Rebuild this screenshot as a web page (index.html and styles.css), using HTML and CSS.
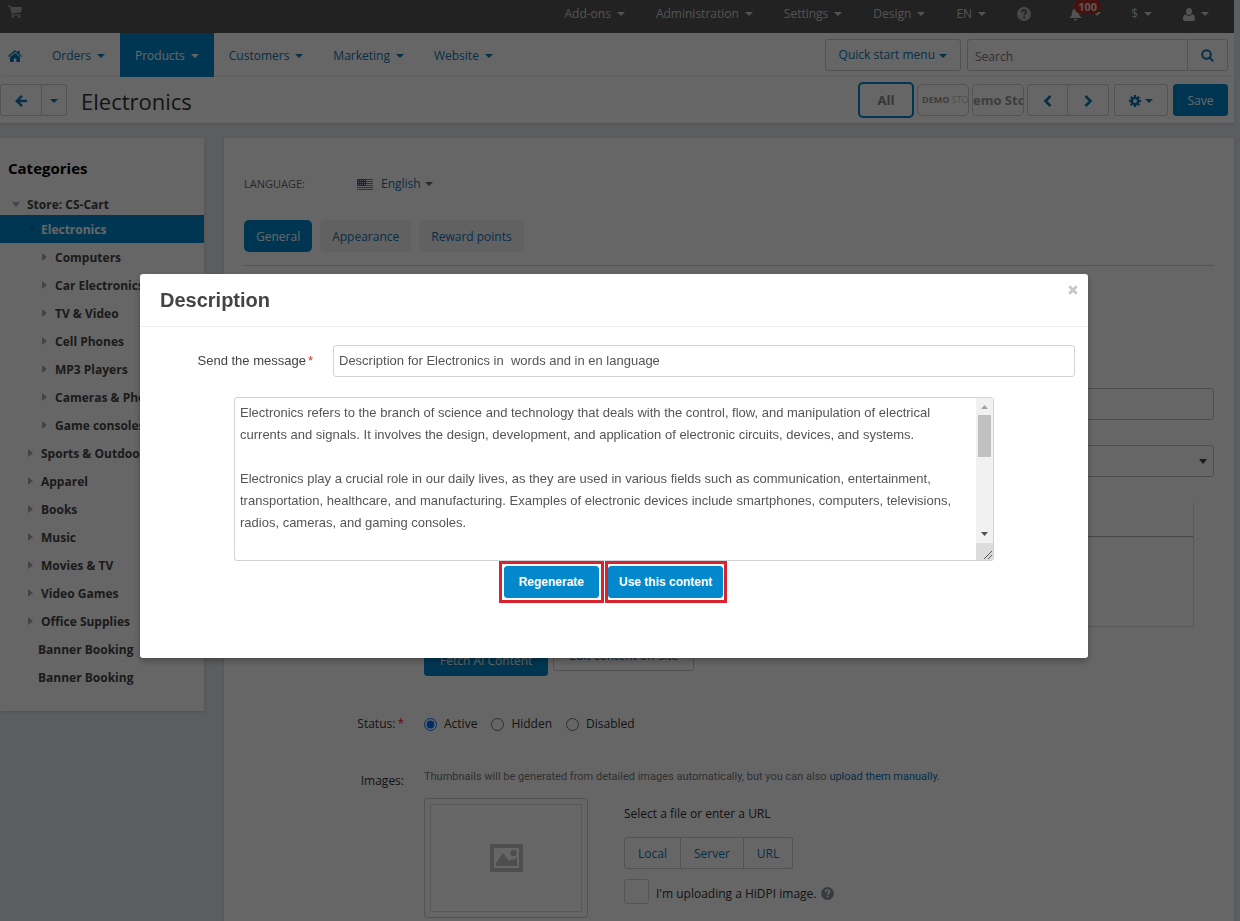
FILE: index.html
```html
<!DOCTYPE html>
<html lang="en">
<head>
    <meta charset="UTF-8">
    <meta name="viewport" content="width=device-width, initial-scale=1.0">
    <title>Electronics - Products</title>
    <link rel="stylesheet" href="styles.css">
</head>
<body>

<!-- Icons -->
<svg class="sprite" aria-hidden="true">
    <symbol id="i-help" viewBox="0 0 14 14">
        <circle cx="7" cy="7" r="7" fill="currentColor"/>
        <path d="M4.800 5.400c0-3 4.500-2.900 4.500-.3 0 1.500-2.200 1.500-2.200 3.200" fill="none" stroke="var(--hole)" stroke-width="1.700"/>
        <rect x="6.200" y="9.400" width="1.800" height="1.800" fill="var(--hole)"/>
    </symbol>
</svg>

<header class="topbar">
    <a href="#" class="cart" aria-label="Storefront">
        <svg width="14" height="13" viewBox="0 0 14 13" fill="currentColor"><path d="M0 .5h2.800l.5 1.500H14l-1 5.500-8.300.8.200 1H12.500v1.200H4L2.100 1.800H0z"/><circle cx="4.800" cy="11.700" r="1.200"/><circle cx="11.300" cy="11.700" r="1.200"/></svg>
    </a>
    <nav class="top-menu">
        <a href="#">Add-ons<i class="caret"></i></a>
        <a href="#">Administration<i class="caret"></i></a>
        <a href="#">Settings<i class="caret"></i></a>
        <a href="#">Design<i class="caret"></i></a>
        <a href="#">EN<i class="caret"></i></a>
        <a href="#" class="top-help" aria-label="Help"><svg width="14" height="14"><use href="#i-help"/></svg></a>
        <a href="#" class="bell" aria-label="Notifications">
            <svg width="13" height="13" viewBox="0 0 13 13" fill="currentColor"><path d="M6.500 0c.8 0 1 .6 1 1C10 1.800 10 4 10.200 6c.2 2 1.300 3 2.800 4H0c1.500-1 2.600-2 2.800-4C3 4 3 1.800 5.500 1c0-.4.2-1 1-1zM5 11h3c0 2-3 2-3 0z"/></svg><i class="caret"></i>
            <span class="badge">100</span>
        </a>
        <a href="#">$<i class="caret"></i></a>
        <a href="#" aria-label="Account"><svg width="12" height="13" viewBox="0 0 12 13" fill="currentColor"><path d="M6 0c2 0 3 1.500 3 3.400S7.700 7 6 7 3 5.300 3 3.400 4 0 6 0zM2.800 6.300c2 2.200 4.400 2.200 6.400 0C11.300 6.700 12 8.500 12 11c0 1.300-.8 2-2 2H2c-1.200 0-2-.7-2-2 0-2.500.7-4.300 2.800-4.700z"/></svg><i class="caret"></i></a>
    </nav>
</header>

<div class="navbar">
    <nav class="main-menu">
        <a href="#" class="home" aria-label="Home">
            <svg width="14" height="12" viewBox="0 0 14 12" fill="currentColor"><path d="M7 0l2.700 2.400V.8h1.900v3.200L14 6.100l-.8.9L7 1.700.8 7 0 6.100z"/><path d="M7 2.900l5 4.200V12H8.300V8.500H5.700V12H2V7.100z"/></svg>
        </a>
        <a href="#">Orders<i class="caret"></i></a>
        <a href="#" class="active">Products<i class="caret"></i></a>
        <a href="#">Customers<i class="caret"></i></a>
        <a href="#">Marketing<i class="caret"></i></a>
        <a href="#">Website<i class="caret"></i></a>
    </nav>
    <button class="btn quick">Quick start menu<i class="caret"></i></button>
    <form class="search">
        <input type="text" placeholder="Search" aria-label="Search">
        <button type="button" class="btn" aria-label="Find">
            <svg width="13" height="13" viewBox="0 0 13 13" fill="none" stroke="currentColor" stroke-width="2"><circle cx="5.500" cy="5.500" r="4.300"/><path d="M8.700 8.700l3.500 3.500"/></svg>
        </button>
    </form>
</div>

<div class="actions">
    <div class="btn-group">
        <button class="btn back" aria-label="Back"><svg width="12" height="12" viewBox="0 0 12 12" fill="none" stroke="currentColor" stroke-width="2.400"><path d="M12 6H2M7 .9L1.800 6 7 11.100"/></svg></button>
        <button class="btn back-more" aria-label="Recent pages"><i class="caret"></i></button>
    </div>
    <h1>Electronics</h1>
    <div class="stores">
        <button class="store selected">All</button>
        <button class="store demo-logo"><b>DEMO</b> STO</button>
        <button class="store demo-text">emo Sto</button>
    </div>
    <div class="btn-group">
        <button class="btn pager" aria-label="Previous"><svg width="9" height="12" viewBox="0 0 9 12" fill="none" stroke="currentColor" stroke-width="2.600"><path d="M7.500 1L2.500 6l5 5"/></svg></button>
        <button class="btn pager" aria-label="Next"><svg width="9" height="12" viewBox="0 0 9 12" fill="none" stroke="currentColor" stroke-width="2.600"><path d="M1.500 1l5 5-5 5"/></svg></button>
    </div>
    <button class="btn gear" aria-label="Tools">
        <svg width="12" height="12" viewBox="0 0 12 12" fill="none" stroke="currentColor"><circle cx="6" cy="6" r="3.100" stroke-width="2.400"/><path d="M6 0v2.500M6 9.500V12M0 6h2.500M9.500 6H12M1.800 1.800l1.700 1.700M8.500 8.500l1.700 1.700M10.200 1.800L8.500 3.500M3.500 8.500l-1.700 1.700" stroke-width="2.300"/></svg><i class="caret"></i>
    </button>
    <button class="btn btn-primary save">Save</button>
</div>

<div class="page">
    <aside class="sidebar">
        <h2>Categories</h2>
        <ul class="tree">
            <li class="store-row"><i class="arrow down"></i><a href="#">Store: CS-Cart</a></li>
            <li class="level-1 current"><i class="arrow down"></i><a href="#">Electronics</a></li>
            <li class="level-2"><i class="arrow"></i><a href="#">Computers</a></li>
            <li class="level-2"><i class="arrow"></i><a href="#">Car Electronics</a></li>
            <li class="level-2"><i class="arrow"></i><a href="#">TV &amp; Video</a></li>
            <li class="level-2"><i class="arrow"></i><a href="#">Cell Phones</a></li>
            <li class="level-2"><i class="arrow"></i><a href="#">MP3 Players</a></li>
            <li class="level-2"><i class="arrow"></i><a href="#">Cameras &amp; Photo</a></li>
            <li class="level-2"><i class="arrow"></i><a href="#">Game consoles</a></li>
            <li class="level-1"><i class="arrow"></i><a href="#">Sports &amp; Outdoors</a></li>
            <li class="level-1"><i class="arrow"></i><a href="#">Apparel</a></li>
            <li class="level-1"><i class="arrow"></i><a href="#">Books</a></li>
            <li class="level-1"><i class="arrow"></i><a href="#">Music</a></li>
            <li class="level-1"><i class="arrow"></i><a href="#">Movies &amp; TV</a></li>
            <li class="level-1"><i class="arrow"></i><a href="#">Video Games</a></li>
            <li class="level-1"><i class="arrow"></i><a href="#">Office Supplies</a></li>
            <li class="plain"><a href="#">Banner Booking</a></li>
            <li class="plain"><a href="#">Banner Booking</a></li>
        </ul>
    </aside>

    <main class="content">
        <div class="language">
            <span class="language-label">Language:</span>
            <svg width="16" height="11" viewBox="0 0 16 11"><rect width="16" height="11" fill="#fff"/><path d="M0 .5h16M0 2.500h16M0 4.500h16M0 6.500h16M0 8.500h16M0 10.500h16" stroke="#ff4a38"/><rect width="9" height="7" fill="#2f5fe0"/><path d="M1 1.500h7M1 3.500h7M1 5.500h7" stroke="#c5d1ee" stroke-dasharray="1 1"/></svg>
            <a href="#">English</a><i class="caret"></i>
        </div>
        <div class="tabs">
            <button class="tab active">General</button>
            <button class="tab">Appearance</button>
            <button class="tab">Reward points</button>
        </div>

        <form class="category-form">
            <div class="row">
                <span></span>
                <input type="text" class="text-input" aria-label="Name">
            </div>
            <div class="row">
                <span></span>
                <select class="text-input" aria-label="Location"><option></option></select>
            </div>
            <div class="row">
                <span></span>
                <div>
                    <div class="editor">
                        <div class="editor-toolbar"></div>
                        <div class="editor-body"></div>
                    </div>
                    <div class="editor-buttons">
                        <button type="button" class="btn btn-primary fetch">Fetch AI Content</button>
                        <button type="button" class="btn">Edit content on-site</button>
                    </div>
                </div>
            </div>
            <div class="row status">
                <span class="label">Status:<em>*</em></span>
                <div class="radios">
                    <label><input type="radio" name="status" checked>Active</label>
                    <label><input type="radio" name="status">Hidden</label>
                    <label><input type="radio" name="status">Disabled</label>
                </div>
            </div>
            <div class="row images">
                <span class="label">Images:</span>
                <div>
                    <p class="hint">Thumbnails will be generated from detailed images automatically, but you can also <a href="#">upload them manually.</a></p>
                    <div class="upload">
                        <div class="thumb"><div class="thumb-inner">
                            <svg width="33" height="28" viewBox="0 0 33 28"><rect x="2" y="2" width="29" height="24" fill="none" stroke="#c3c3c3" stroke-width="4"/><path d="M6 22v-3l7-10 6 8 3-2 2 1 3-3v9z" fill="#c3c3c3"/><circle cx="23.500" cy="9" r="3.200" fill="#c3c3c3"/></svg>
                        </div></div>
                        <div class="sources">
                            <p>Select a file or enter a URL</p>
                            <div class="btn-group">
                                <button type="button" class="btn">Local</button>
                                <button type="button" class="btn">Server</button>
                                <button type="button" class="btn">URL</button>
                            </div>
                            <label class="hidpi"><input type="checkbox"><span>I'm uploading a HiDPI image.</span><svg width="13" height="13" viewBox="0 0 14 14"><use href="#i-help"/></svg></label>
                        </div>
                    </div>
                </div>
            </div>
        </form>
    </main>
</div>

<div class="backdrop">
    <div class="modal" role="dialog" aria-labelledby="modalTitle">
        <div class="modal-header">
            <h3 id="modalTitle">Description</h3>
            <button class="close" aria-label="Close"><svg width="10" height="10" viewBox="0 0 10 10" stroke="currentColor" stroke-width="3"><path d="M1.200 1.200l7.600 7.600M8.800 1.200L1.200 8.800"/></svg></button>
        </div>
        <div class="modal-body">
            <div class="message">
                <label for="message">Send the message<em>*</em></label>
                <input type="text" id="message" value="Description for Electronics in  words and in en language">
            </div>
            <div class="answer">
                <textarea aria-label="Generated description">Electronics refers to the branch of science and technology that deals with the control, flow, and manipulation of electrical currents and signals. It involves the design, development, and application of electronic circuits, devices, and systems.

Electronics play a crucial role in our daily lives, as they are used in various fields such as communication, entertainment, transportation, healthcare, and manufacturing. Examples of electronic devices include smartphones, computers, televisions, radios, cameras, and gaming consoles.</textarea>
                <div class="scrollbar" aria-hidden="true">
                    <svg width="17" height="17" viewBox="0 0 17 17"><path d="M5 11h7L8.500 7z" fill="#a3a3a3"/></svg>
                    <div class="scroll-track"><div class="scroll-thumb"></div></div>
                    <svg width="17" height="17" viewBox="0 0 17 17"><path d="M5 6h7l-3.500 4z" fill="#505050"/></svg>
                    <svg class="grip" width="17" height="17" viewBox="0 0 17 17"><path d="M8 16l8-8M12 16l4-4" stroke="#555"/></svg>
                </div>
            </div>
            <div class="modal-buttons">
                <span class="mark"><button class="btn btn-primary">Regenerate</button></span>
                <span class="mark mark-use"><button class="btn btn-primary">Use this content</button></span>
            </div>
        </div>
    </div>
</div>

</body>
</html>
```
FILE: styles.css
```css
* {
    box-sizing: border-box;
}
html {
    background-color: #e6e9ed;
}
body {
    margin: 0;
    height: 100vh;
    overflow: hidden;
    padding-right: 6px;
    font-family: "Open Sans", "Noto Sans", sans-serif;
    font-size: 12px;
    line-height: 20px;
    color: #333;
}
a {
    color: #0e74b4;
    text-decoration: none;
}
button, input, select, textarea {
    font: inherit;
    color: inherit;
    margin: 0;
}
h1, h2, h3, p, ul {
    margin: 0;
    padding: 0;
}
em {
    font-style: normal;
    color: #e02b2b;
}
.sprite {
    display: none;
}
.caret {
    display: inline-block;
    border: 4px solid transparent;
    border-top-color: currentColor;
    border-bottom: 0;
    margin-left: 6px;
}

/* Top bar */
.topbar {
    display: flex;
    justify-content: space-between;
    height: 33px;
    padding: 0 9px 5px 8px;
    background-color: #555;
}
.cart {
    display: flex;
    padding-top: 5px;
    color: #aaa;
}
.top-menu, .top-menu a {
    display: flex;
    align-items: center;
}
.top-menu a {
    padding: 0 16px 0 15px;
    color: #d0d0d0;
}
.top-menu .top-help {
    --hole: #555;
    color: #aeb6bf;
}
.top-menu .bell {
    position: relative;
    padding: 0 15px 0 22px;
}
.bell .caret {
    margin-left: 11px;
}
.badge {
    position: absolute;
    left: 27px;
    top: -9px;
    padding: 0 4px;
    border-radius: 8px;
    background-color: #b52b27;
    color: #ddd;
    font-size: 11px;
    font-weight: bold;
    line-height: 15px;
}

/* Main menu */
.navbar {
    display: flex;
    align-items: center;
    height: 44px;
    padding-right: 6px;
    background-color: #fff;
    border-bottom: 1px solid #f8f8f8;
}
.main-menu {
    display: flex;
    flex: 1;
}
.main-menu a {
    display: flex;
    align-items: center;
    height: 44px;
    padding: 2px 15px 0;
}
.main-menu .home {
    padding-left: 8px;
    color: #0277b5;
}
.main-menu .active {
    background-color: #0388cc;
    color: #fff;
}
.btn {
    height: 32px;
    padding: 1px 13px 0;
    border: 1px solid #c8ccd1;
    border-radius: 3px;
    background-color: #fff;
    color: #0e74b4;
    white-space: nowrap;
}
.btn .caret {
    vertical-align: middle;
}
.btn svg {
    vertical-align: middle;
}
.btn-primary {
    background-color: #0388cc;
    border-color: #0388cc;
    color: #fff;
}
.btn-group {
    display: flex;
}
.btn-group .btn {
    border-radius: 0;
}
.btn-group .btn + .btn {
    border-left: 0;
}
.btn-group .btn:first-child {
    border-radius: 3px 0 0 3px;
}
.btn-group .btn:last-child {
    border-radius: 0 3px 3px 0;
}
.quick {
    margin-right: 6px;
}
.quick .caret {
    margin-left: 4px;
}
.search {
    display: flex;
}
.search input {
    width: 220px;
    height: 32px;
    padding: 3px 7px 0;
    border: 1px solid #c8ccd1;
    border-right: 0;
    border-radius: 3px 0 0 3px;
}
.search input::placeholder {
    color: #777;
}
.search .btn {
    border-radius: 0 3px 3px 0;
}

/* Page actions */
.actions {
    display: flex;
    align-items: center;
    height: 46px;
    padding-right: 6px;
    background-color: #fff;
    box-shadow: 0 1px 3px #c4c9cf;
}
.actions h1 {
    flex: 1;
    margin-left: 14px;
    padding-top: 2px;
    font-size: 22px;
    font-weight: normal;
    line-height: 32px;
}
.back {
    width: 42px;
}
.btn.back-more {
    width: 25px;
    padding: 0;
}
.back-more .caret {
    margin: 0;
}
.stores {
    display: flex;
    align-items: center;
    gap: 3px;
    margin-right: 3px;
}
.store {
    width: 52px;
    height: 32px;
    padding: 0;
    border: 1px solid #c8ccd1;
    border-radius: 5px;
    background-color: #fff;
    color: #999;
    overflow: hidden;
    white-space: nowrap;
}
.store.selected {
    width: 56px;
    height: 36px;
    border: 2px solid #0388cc;
    color: #888;
    font-weight: bold;
    font-size: 13px;
}
.demo-logo {
    padding-left: 4px;
    font-size: 9px;
    text-align: left;
    color: #c4c4c4;
}
.demo-logo b {
    color: #999;
}
.demo-text {
    font-weight: bold;
    font-size: 13px;
}
.pager {
    width: 41px;
}
.gear {
    width: 54px;
    margin: 0 5px;
}
.gear .caret {
    margin-left: 4px;
}
.save {
    width: 55px;
}

/* Categories tree */
.page {
    display: flex;
    align-items: flex-start;
    gap: 20px;
    padding-top: 15px;
}
.sidebar {
    flex: none;
    width: 204px;
    padding: 20px 0;
    background-color: #fff;
    box-shadow: 0 1px 3px #c4c9cf;
    font-weight: bold;
}
.sidebar h2 {
    margin: 0 8px 15px;
    font-size: 15px;
    color: #000;
}
.tree {
    list-style-type: none;
}
.tree li {
    display: flex;
    align-items: center;
    height: 28px;
    white-space: nowrap;
    overflow: hidden;
}
.tree a {
    padding-top: 2px;
    color: #444;
}
.tree .store-row {
    height: 22px;
    padding-left: 12px;
}
.tree .level-1 {
    padding-left: 28px;
}
.tree .level-2 {
    padding-left: 42px;
}
.tree .plain {
    padding-left: 38px;
}
.tree .current {
    background-color: #0388cc;
}
.tree .current a {
    color: #fff;
}
.arrow {
    border: 4px solid transparent;
    border-left: 5px solid #aaa;
    border-right: 0;
    margin-right: 8px;
}
.arrow.down {
    border: 4px solid transparent;
    border-top: 5px solid #aaa;
    border-bottom: 0;
    margin-right: 7px;
}
.current .arrow.down {
    border-top-color: #0b6fa5;
    margin-right: 5px;
}

/* Category form */
.content {
    flex: 1;
    min-width: 0;
    padding: 36px 20px 30px;
    background-color: #fff;
    box-shadow: 0 1px 3px #c4c9cf;
}
.language {
    display: flex;
    align-items: center;
}
.language svg {
    margin-right: 8px;
}
.language-label {
    width: 113px;
    font-size: 11px;
    text-transform: uppercase;
    color: #666;
}
.language .caret {
    margin-left: 4px;
    color: #666;
}
.tabs {
    display: flex;
    gap: 8px;
    padding: 26px 0 13px;
    border-bottom: 1px solid #ccd1d6;
}
.tab {
    height: 32px;
    padding: 2px 12px 0;
    border: 0;
    border-radius: 5px;
    background-color: #f5f3f4;
    color: #0e74b4;
}
.tab.active {
    background-color: #0388cc;
    color: #fff;
}
.category-form {
    margin-top: 122px;
}
.row {
    display: grid;
    grid-template-columns: 160px 1fr;
    column-gap: 20px;
    margin-bottom: 25px;
}
.label {
    text-align: right;
}
.label em, .message em {
    margin-left: 2px;
}
.text-input {
    width: 100%;
    height: 32px;
    border: 1px solid #c0c4c8;
    border-radius: 3px;
    background-color: #fff;
}
select.text-input {
    appearance: none;
    background: #fff url("data:image/svg+xml,%3Csvg xmlns='http://www.w3.org/2000/svg' width='8' height='5'%3E%3Cpath d='M0 0h8L4 5z' fill='%23444'/%3E%3C/svg%3E") no-repeat right 6px center;
}
.editor {
    margin-right: 20px;
    border: 1px solid #ddd;
    border-top-color: #fff;
}
.editor-toolbar {
    height: 34px;
    border-bottom: 1px solid #b0b0b0;
}
.editor-body {
    height: 89px;
}
.editor-buttons {
    display: flex;
    align-items: flex-start;
    gap: 5px;
    padding-top: 12px;
}
.editor-buttons .btn {
    padding: 1px 15px 0;
}
.fetch {
    margin-top: 5px;
}
.status {
    margin: 38px 0 33px;
}
.radios {
    display: flex;
    gap: 14px;
}
.radios label {
    display: flex;
    align-items: center;
}
.radios input {
    width: 13px;
    height: 13px;
    margin-right: 7px;
}
.images .label {
    padding-top: 4px;
}
.hint {
    font-family: Roboto, "Open Sans", sans-serif;
    font-size: 11px;
    color: #777;
}
.upload {
    display: flex;
    gap: 36px;
    margin-top: 11px;
}
.thumb {
    width: 164px;
    height: 120px;
    padding: 5px;
    border: 1px solid #ccc;
    border-radius: 3px;
}
.thumb-inner {
    display: flex;
    align-items: center;
    justify-content: center;
    height: 100%;
    border: 1px solid #ddd;
}
.sources {
    padding-top: 6px;
}
.sources .btn-group {
    margin: 13px 0 10px;
}
.hidpi {
    --hole: #fff;
    display: flex;
    align-items: center;
}
.hidpi input {
    appearance: none;
    width: 25px;
    height: 25px;
    margin-right: 7px;
    border: 1px solid #d5d5d5;
    border-radius: 3px;
}
.hidpi span, .hidpi svg {
    margin-top: 4px;
}
.hidpi svg {
    margin-left: 5px;
    color: #8c94a0;
}

/* Description dialog */
.backdrop {
    position: fixed;
    inset: 0;
    padding: 274px 152px 0 140px;
    background-color: rgba(0, 0, 0, 0.6);
    font-family: "Liberation Sans", Arial, sans-serif;
    font-size: 13px;
}
.modal {
    border-radius: 3px;
    background-color: #fff;
    box-shadow: 0 3px 7px rgba(0, 0, 0, 0.3);
}
.modal-header {
    display: flex;
    justify-content: space-between;
    align-items: flex-start;
    padding: 11px 10px 11px 20px;
    border-bottom: 1px solid #eee;
}
.modal-header h3 {
    font-size: 20px;
    line-height: 30px;
    color: #444;
}
.close {
    display: flex;
    padding: 0;
    border: 0;
    background: none;
    color: #c8c8c8;
}
.modal-body {
    padding: 18px 13px 55px;
}
.message {
    display: flex;
    align-items: center;
    gap: 20px;
}
.message label {
    width: 160px;
    text-align: right;
    color: #444;
}
.message input {
    flex: 1;
    height: 32px;
    padding: 0 5px 2px;
    border: 1px solid #d0d4d8;
    border-radius: 3px;
    color: #555;
}
.answer {
    display: flex;
    max-width: 760px;
    height: 164px;
    margin: 20px auto 0;
    border: 1px solid #d0d4d8;
    border-radius: 3px;
}
.answer textarea {
    flex: 1;
    padding: 4px 5px;
    border: 0;
    background: none;
    line-height: 22px;
    color: #555;
    resize: none;
    overflow: hidden;
}
.scrollbar {
    display: flex;
    flex-direction: column;
    width: 17px;
    background-color: #f1f1f1;
}
.scroll-track {
    flex: 1;
    padding: 0 2px;
}
.scroll-thumb {
    height: 42px;
    background-color: #c1c1c1;
}
.grip {
    background-color: #dcdcdc;
}
.modal-buttons {
    display: flex;
    justify-content: center;
    gap: 1px;
    margin-left: -2px;
}
.mark {
    padding: 2px;
    border: 3px solid #d9232e;
}
.mark-use {
    padding: 2px 1px 2px 0;
}
.modal-buttons .btn {
    display: block;
    padding: 0 14px;
    font-size: 12px;
    font-weight: bold;
}
.modal-buttons .mark-use .btn {
    padding: 0 10px;
}
```
